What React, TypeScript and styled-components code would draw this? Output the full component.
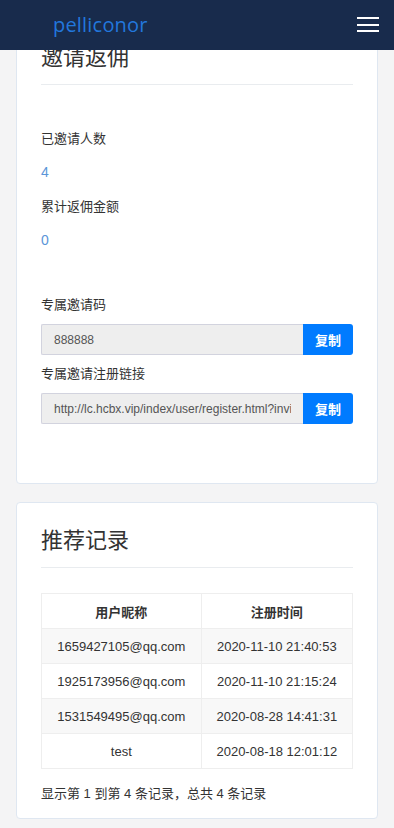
import styled, { createGlobalStyle } from "styled-components";

const GlobalStyle = createGlobalStyle`
  html, body {
    margin: 0;
    padding: 0;
    background: #f4f4f5;
  }
  body {
    font-family: "Liberation Sans", "Noto Sans CJK SC", Arial, sans-serif;
    color: #333;
    font-size: 14px;
  }
`;

const records = [
  { name: "1659427105@qq.com", time: "2020-11-10 21:40:53" },
  { name: "1925173956@qq.com", time: "2020-11-10 21:15:24" },
  { name: "1531549495@qq.com", time: "2020-08-28 14:41:31" },
  { name: "test", time: "2020-08-18 12:01:12" },
];

export default function App() {
  return (
    <>
      <GlobalStyle />
      <Header>
        <Logo>pelliconor</Logo>
        <Burger aria-label="menu">
          <span />
          <span />
          <span />
        </Burger>
      </Header>
      <Page>
        <Card $height={465}>
          <Title>邀请返佣</Title>
          <Stats>
            <Label>已邀请人数</Label>
            <Value>4</Value>
            <Label>累计返佣金额</Label>
            <Value>0</Value>
          </Stats>
          <Fields>
            <Label>专属邀请码</Label>
            <InputRow>
              <Input readOnly value="888888" />
              <CopyButton>复制</CopyButton>
            </InputRow>
            <Label>专属邀请注册链接</Label>
            <InputRow>
              <Input readOnly value="http://lc.hcbx.vip/index/user/register.html?invite=888888" />
              <CopyButton>复制</CopyButton>
            </InputRow>
          </Fields>
        </Card>
        <Card>
          <Title>推荐记录</Title>
          <Table>
            <thead>
              <tr>
                <th>用户昵称</th>
                <th>注册时间</th>
              </tr>
            </thead>
            <tbody>
              {records.map((r) => (
                <tr key={r.name}>
                  <td>{r.name}</td>
                  <td>{r.time}</td>
                </tr>
              ))}
            </tbody>
          </Table>
          <Summary>显示第 1 到第 4 条记录，总共 4 条记录</Summary>
        </Card>
      </Page>
    </>
  );
}

const Header = styled.header`
  position: fixed;
  top: 0;
  left: 0;
  right: 0;
  height: 50px;
  background: #182b4c;
  display: flex;
  align-items: center;
  justify-content: space-between;
  padding: 0 15px 0 53px;
  z-index: 10;
`;

const Logo = styled.div`
  font-family: "Open Sans", "Noto Sans", sans-serif;
  font-size: 20px;
  color: #2277dc;
  letter-spacing: 0.2px;
  margin-top: -2px;
`;

const Burger = styled.div`
  width: 22px;
  display: flex;
  flex-direction: column;
  gap: 4.5px;
  margin-top: -1px;
  span {
    display: block;
    height: 2px;
    background: #fff;
  }
`;

const Page = styled.main`
  padding: 19px 16px 8px;
  display: flex;
  flex-direction: column;
  gap: 18px;
`;

const Card = styled.section<{ $height?: number }>`
  background: #fff;
  border: 1px solid #dfe7f1;
  border-radius: 4px;
  padding: 0 24px 14px;
  ${(p) => (p.$height ? `height: ${p.$height}px;` : "")}
  box-sizing: border-box;
`;

const Title = styled.h2`
  margin: 0;
  padding: 20px 0 14px;
  font-family: "Noto Sans CJK SC", sans-serif;
  font-weight: 400;
  font-size: 22px;
  line-height: 30px;
  color: #333;
  border-bottom: 1px solid #e9ecef;
`;

const Stats = styled.div`
  display: flex;
  flex-direction: column;
  padding-top: 43px;
`;

const Label = styled.div`
  font-family: "Noto Sans CJK SC", sans-serif;
  font-size: 13px;
  line-height: 20px;
  color: #333;
`;

const Value = styled.div`
  font-size: 14px;
  line-height: 20px;
  color: #5a95d8;
  margin: 14px 0 14px;
`;

const Fields = styled.div`
  display: flex;
  flex-direction: column;
  padding-top: 30px;
  ${Label} {
    margin-bottom: 10px;
  }
`;

const InputRow = styled.div`
  display: flex;
  height: 31px;
  margin-bottom: 8px;
`;

const Input = styled.input`
  flex: 1;
  min-width: 0;
  box-sizing: border-box;
  height: 31px;
  border: 1px solid #d2d3de;
  border-right: none;
  background: #eee;
  color: #555;
  padding: 0 12px;
  font-family: "Liberation Sans", Arial, sans-serif;
  font-size: 12px;
  outline: none;
  border-radius: 2px 0 0 2px;
`;

const CopyButton = styled.button`
  width: 50px;
  height: 31px;
  border: none;
  background: #007bff;
  color: #fff;
  font-family: "Noto Sans CJK SC", sans-serif;
  font-weight: 700;
  font-size: 13px;
  border-radius: 0 3px 3px 0;
  padding: 0;
`;

const Table = styled.table`
  width: 100%;
  margin-top: 25px;
  border-collapse: collapse;
  table-layout: fixed;
  font-size: 13px;
  th,
  td {
    border: 1px solid #eeeeee;
    height: 34px;
    padding: 0;
    text-align: center;
    vertical-align: middle;
    color: #333;
  }
  th:first-child,
  td:first-child {
    width: 51%;
  }
  th {
    font-family: "Noto Sans CJK SC", sans-serif;
    font-weight: 700;
    font-size: 13px;
  }
  tbody tr:nth-child(odd) td {
    background: #f8f8f8;
  }
`;

const Summary = styled.div`
  margin-top: 15px;
  font-size: 13px;
  line-height: 20px;
  color: #333;
`;
